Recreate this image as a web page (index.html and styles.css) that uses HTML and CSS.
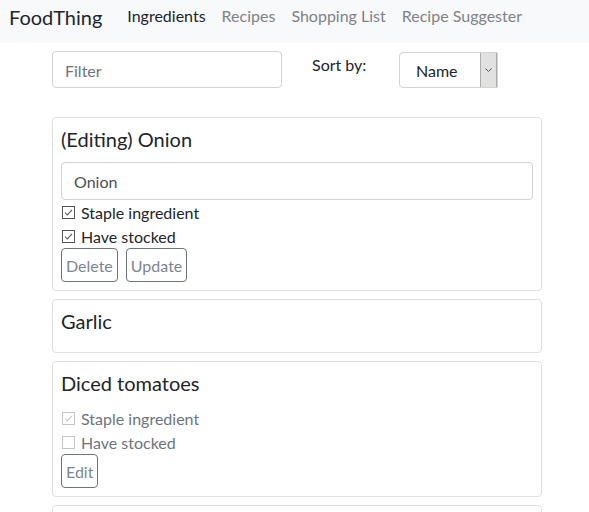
FILE: index.html
```html
<!DOCTYPE html>
<html>
<head>
<meta charset="utf-8">
<link rel="stylesheet" href="styles.css">
</head>
<body>
<nav class="navbar">
  <span class="brand">FoodThing</span>
  <a class="nav-link active">Ingredients</a>
  <a class="nav-link">Recipes</a>
  <a class="nav-link">Shopping List</a>
  <a class="nav-link">Recipe Suggester</a>
</nav>
<main class="container">
  <div class="toolbar">
    <div class="filter">Filter</div>
    <div class="sort-label">Sort by:</div>
    <div class="select">
      <span class="select-value">Name</span>
      <span class="select-arrow"><svg width="7" height="4" viewBox="0 0 7 4"><path d="M0.5 0.5 L3.5 3.5 L6.5 0.5" fill="none" stroke="#555" stroke-width="1"/></svg></span>
    </div>
  </div>

  <div class="card">
    <h5 class="card-title">(Editing) Onion</h5>
    <div class="text-input">Onion</div>
    <label class="check"><span class="box"><svg width="13" height="13" viewBox="0 0 13 13"><rect x="0.5" y="0.5" width="12" height="12" fill="#fff" stroke="#555"/><path d="M3 6.5 L5.3 9 L10 3.8" fill="none" stroke="#555" stroke-width="1.1"/></svg></span>Staple ingredient</label>
    <label class="check"><span class="box"><svg width="13" height="13" viewBox="0 0 13 13"><rect x="0.5" y="0.5" width="12" height="12" fill="#fff" stroke="#555"/><path d="M3 6.5 L5.3 9 L10 3.8" fill="none" stroke="#555" stroke-width="1.1"/></svg></span>Have stocked</label>
    <div class="buttons">
      <button class="btn">Delete</button>
      <button class="btn">Update</button>
    </div>
  </div>

  <div class="card">
    <h5 class="card-title">Garlic</h5>
  </div>

  <div class="card">
    <h5 class="card-title">Diced tomatoes</h5>
    <label class="check disabled"><span class="box"><svg width="13" height="13" viewBox="0 0 13 13"><rect x="0.5" y="0.5" width="12" height="12" fill="#fff" stroke="#c4c4c4"/><path d="M3 6.5 L5.3 9 L10 3.8" fill="none" stroke="#c4c4c4" stroke-width="1.1"/></svg></span>Staple ingredient</label>
    <label class="check disabled"><span class="box"><svg width="13" height="13" viewBox="0 0 13 13"><rect x="0.5" y="0.5" width="12" height="12" fill="#fff" stroke="#c4c4c4"/></svg></span>Have stocked</label>
    <div class="buttons">
      <button class="btn">Edit</button>
    </div>
  </div>

  <div class="card card-last">
    <h5 class="card-title">Carrot</h5>
  </div>
</main>
</body>
</html>
```
FILE: styles.css
```css
* { box-sizing: border-box; }
body {
  margin: 0;
  font-family: Lato, "Noto Sans", sans-serif;
  font-size: 16px;
  line-height: 1.5;
  color: #212529;
  background: #fff;
}
.navbar {
  display: flex;
  align-items: flex-start;
  height: 43px;
  background: #f8f9fa;
  padding: 4px 0 0 9px;
}
.brand {
  font-size: 20px;
  line-height: 26px;
  color: #212529;
  margin-right: 17px;
}
.nav-link {
  padding: 0 8px;
  line-height: 24px;
  color: #7f8286;
}
.nav-link.active { color: #212529; }
.container {
  width: 490px;
  margin-left: 52px;
  padding-top: 8px;
}
.toolbar {
  display: flex;
  align-items: flex-start;
  margin-bottom: 29px;
}
.filter {
  width: 230px;
  height: 37px;
  border: 1px solid #ced4da;
  border-radius: 4px;
  padding: 7px 12px 0;
  color: #6c757d;
}
.sort-label {
  margin-left: 30px;
  padding-top: 2px;
  width: 87px;
}
.select {
  display: flex;
  width: 99px;
  height: 36px;
  border: 1px solid #ced4da;
  border-radius: 4px 0 0 4px;
  margin-top: 1px;
}
.select-value {
  flex: 1;
  padding: 6px 0 0 16px;
  color: #212529;
}
.select-arrow {
  width: 17px;
  background: #e1e1e1;
  border-left: 1px solid #adadad;
  border-right: 1px solid #adadad;
  display: flex;
  align-items: center;
  justify-content: center;
}
.card {
  border: 1px solid #dfdfdf;
  border-radius: 4px;
  padding: 8px 8px;
  margin-bottom: 8px;
}
.card-title {
  margin: 0 0 11px;
  padding-top: 1px;
  font-size: 20px;
  font-weight: 400;
  line-height: 24px;
}
.text-input {
  height: 38px;
  border: 1px solid #ced4da;
  border-radius: 4px;
  padding: 7px 12px 0;
  color: #495057;
}
.check {
  display: flex;
  align-items: center;
  height: 24px;
  padding-top: 2px;
}
.box {
  display: flex;
  width: 13px;
  height: 13px;
  margin: -2px 6px 0 1px;
}
.check.disabled { color: #6c757d; }
.buttons {
  display: flex;
  gap: 8px;
}
.btn {
  font: inherit;
  height: 34px;
  padding: 2px 4px 0;
  border: 1px solid #6c757d;
  border-radius: 4px;
  background: #fff;
  color: #7b8692;
}
```
